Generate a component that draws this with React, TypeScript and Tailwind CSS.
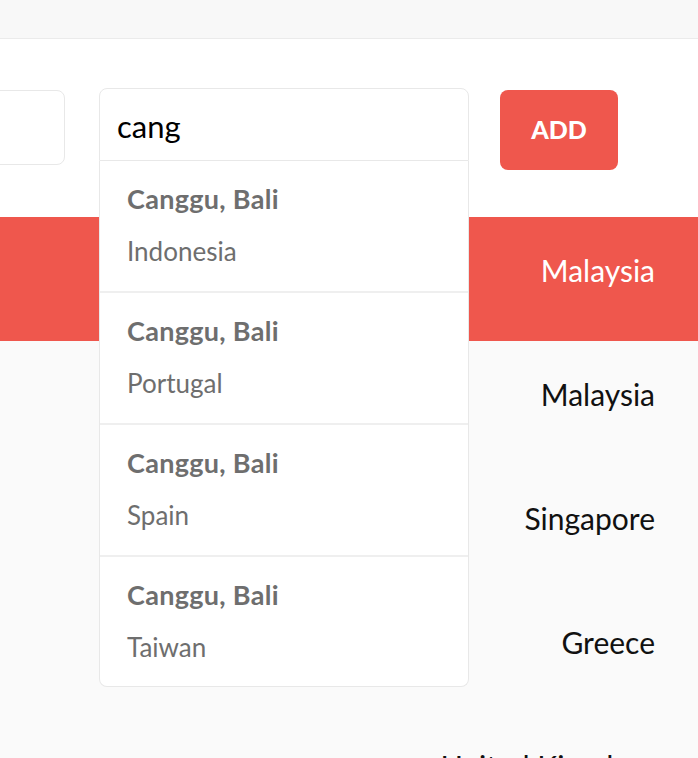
const suggestions = ['Indonesia', 'Portugal', 'Spain', 'Taiwan'];
const rows = ['Malaysia', 'Malaysia', 'Singapore', 'Greece', 'United Kingdom'];

export default function App() {
  return (
    <div className="h-[758px] overflow-hidden bg-[#fafafa] font-['Lato',sans-serif]">
      <div className="h-[39px] border-b border-[#ebebeb] bg-[#f8f8f8]" />

      <div className="relative z-10 flex h-[178px] items-start bg-white pt-[49px]">
        <div className="ml-[-135px] mt-[2px] h-[75px] w-[200px] shrink-0 rounded-lg border border-[#e8e8e8] bg-white" />

        <div className="relative ml-[34px] w-[370px] shrink-0">
          <div className="flex h-[73px] items-center rounded-t-lg border border-[#e8e8e8] bg-white px-[17px]">
            <span className="mt-[3px] text-[31px] leading-none text-black">cang</span>
          </div>
          <ul className="absolute left-0 right-0 top-full rounded-b-lg border border-t-0 border-[#e8e8e8] bg-white">
            {suggestions.map((country, i) => (
              <li
                key={country}
                className={`px-[27px] pt-[21px] ${i < suggestions.length - 1 ? 'h-[132px] border-b-2 border-[#efefef]' : 'h-[129px]'}`}
              >
                <p className="text-[27px] font-bold leading-[34px] tracking-[0.3px] text-[#6e6e6e]">Canggu, Bali</p>
                <p className="mt-[18px] text-[26px] leading-[34px] text-[#6e6e6e]">{country}</p>
              </li>
            ))}
          </ul>
        </div>

        <button className="ml-[31px] mt-[2px] flex h-[80px] w-[118px] shrink-0 items-center justify-center rounded-lg bg-[#ef574d] text-[25px] font-black text-white">
          ADD
        </button>
      </div>

      <div>
        {rows.map((name, i) => (
          <div
            key={i}
            className={`flex h-[124px] items-center justify-end pb-[18px] pr-[43px] text-[30px] ${i === 0 ? 'bg-[#ef574d] text-white' : 'text-[#111111]'}`}
          >
            {name}
          </div>
        ))}
      </div>
    </div>
  );
}
